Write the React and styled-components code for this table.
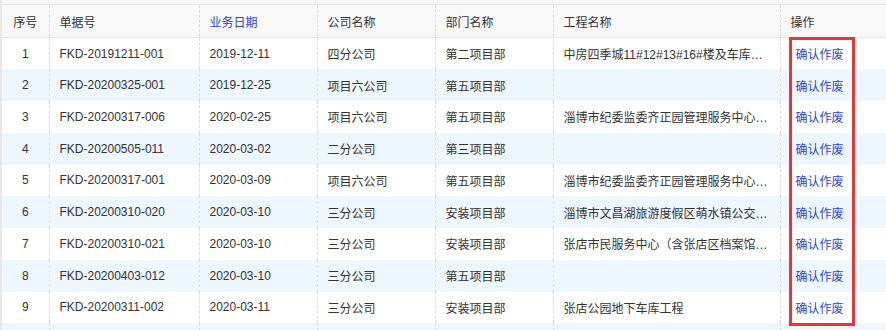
import styled, { createGlobalStyle } from "styled-components";

const GlobalStyle = createGlobalStyle`
  html, body {
    margin: 0;
    padding: 0;
    background: #ffffff;
    overflow: hidden;
  }
  body {
    font-family: "Liberation Sans", "Noto Sans CJK SC", Arial, sans-serif;
    font-size: 12px;
    color: #333333;
  }
`;

const Wrapper = styled.div`
  position: relative;
  width: 886px;
  height: 330px;
  box-sizing: border-box;
  padding-top: 4px;
  border-left: 2px solid #e8e8e8;
  background: #f7f7f7;
`;

const Table = styled.table`
  width: 100%;
  border-collapse: collapse;
  table-layout: fixed;
  background: #ffffff;
`;

const HeadRow = styled.tr`
  height: 33px;
  background: #f8f8f8;
  border-top: 1px solid #e6e6e6;
  border-bottom: 1px solid #e8e8e8;
`;

const HeadCell = styled.th`
  font-weight: normal;
  text-align: ${(p) => (p.$center ? "center" : "left")};
  padding: 0 10px;
  color: ${(p) => (p.$active ? "#2b43dc" : "#333333")};
  border-right: 1px dashed #dcdcdc;
  white-space: nowrap;

  &:last-child {
    border-right: none;
  }
`;

const Row = styled.tr`
  height: 31.75px;
  background: ${(p) => (p.$striped ? "#eef6fe" : "#ffffff")};
`;

const Cell = styled.td`
  padding: 0 10px;
  text-align: ${(p) => (p.$center ? "center" : "left")};
  border-right: 1px dashed #dcdcdc;
  white-space: nowrap;
  overflow: hidden;
  text-overflow: ellipsis;

  &:last-child {
    border-right: none;
  }
`;

const ActionCell = styled(Cell)`
  padding-left: 15px;
`;

const ActionLink = styled.a`
  color: #2b43dc;
  text-decoration: none;
  cursor: pointer;
`;

const Highlight = styled.div`
  position: absolute;
  left: 787px;
  top: 37px;
  width: 66px;
  height: 289px;
  box-sizing: border-box;
  border: 3px solid #ee3333;
  pointer-events: none;
`;

const columns = [
  { title: "序号", width: 47, center: true },
  { title: "单据号", width: 150 },
  { title: "业务日期", width: 118, active: true },
  { title: "公司名称", width: 118 },
  { title: "部门名称", width: 118 },
  { title: "工程名称", width: 227 },
  { title: "操作" },
];

const rows = [
  ["FKD-20191211-001", "2019-12-11", "四分公司", "第二项目部", "中房四季城11#12#13#16#楼及车库工程"],
  ["FKD-20200325-001", "2019-12-25", "项目六公司", "第五项目部", ""],
  ["FKD-20200317-006", "2020-02-25", "项目六公司", "第五项目部", "淄博市纪委监委齐正园管理服务中心建设工程"],
  ["FKD-20200505-011", "2020-03-02", "二分公司", "第三项目部", ""],
  ["FKD-20200317-001", "2020-03-09", "项目六公司", "第五项目部", "淄博市纪委监委齐正园管理服务中心建设工程"],
  ["FKD-20200310-020", "2020-03-10", "三分公司", "安装项目部", "淄博市文昌湖旅游度假区萌水镇公交首末站"],
  ["FKD-20200310-021", "2020-03-10", "三分公司", "安装项目部", "张店市民服务中心（含张店区档案馆）工程"],
  ["FKD-20200403-012", "2020-03-10", "三分公司", "第五项目部", ""],
  ["FKD-20200311-002", "2020-03-11", "三分公司", "安装项目部", "张店公园地下车库工程"],
  ["FKD-20200312-003", "2020-03-12", "三分公司", "安装项目部", ""],
];

const App = () => {
  return (
    <>
      <GlobalStyle />
      <Wrapper>
        <Table>
          <colgroup>
            {columns.map((c, i) => (
              <col key={i} style={c.width ? { width: c.width } : undefined} />
            ))}
          </colgroup>
          <thead>
            <HeadRow>
              {columns.map((c, i) => (
                <HeadCell key={i} $center={c.center} $active={c.active}>
                  {c.title}
                </HeadCell>
              ))}
            </HeadRow>
          </thead>
          <tbody>
            {rows.map((r, i) => (
              <Row key={i} $striped={i % 2 === 1}>
                <Cell $center>{i + 1}</Cell>
                {r.map((v, j) => (
                  <Cell key={j}>{v}</Cell>
                ))}
                <ActionCell>
                  <ActionLink>确认作废</ActionLink>
                </ActionCell>
              </Row>
            ))}
          </tbody>
        </Table>
        <Highlight />
      </Wrapper>
    </>
  );
};

export default App;
